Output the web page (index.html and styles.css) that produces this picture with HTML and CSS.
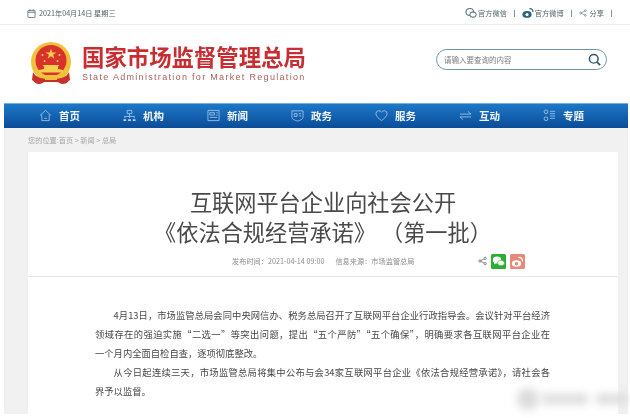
FILE: index.html
```html
<!DOCTYPE html>
<html lang="zh-CN">
<head>
    <meta charset="UTF-8">
    <meta name="viewport" content="width=device-width, initial-scale=1.0">
    <title>互联网平台企业向社会公开《依法合规经营承诺》（第一批）</title>
    <link rel="stylesheet" href="styles.css">
</head>
<body>
    <div class="shot">
        <!-- Top bar -->
        <div class="topbar">
            <div class="date">
                <svg class="ico-date" viewBox="0 0 10 10"><rect x="1" y="1.5" width="8" height="8" rx="1" fill="none" stroke="#5b7480" stroke-width="1"/><path d="M1 3.6h8M3 .5v2M7 .5v2" stroke="#5b7480" stroke-width="1"/></svg>
                <span>2021年04月14日 星期三</span>
            </div>
            <div class="links">
                <svg class="ico-link" viewBox="0 0 12 12"><ellipse cx="4.8" cy="5" rx="4" ry="3.6" fill="none" stroke="#44606e"/><ellipse cx="8" cy="7.6" rx="3.2" ry="2.7" fill="#fff" stroke="#44606e"/></svg>
                <span>官方微信</span>
                <i class="sep"></i>
                <svg class="ico-link" viewBox="0 0 12 12"><ellipse cx="5" cy="7.4" rx="4.6" ry="3.4" fill="#2f5f7a"/><circle cx="5" cy="7.6" r="1.6" fill="#fff"/><path d="M7.5 1.6a3 3 0 0 1 3.4 3.4" fill="none" stroke="#2f5f7a" stroke-width="1.2"/></svg>
                <span>官方微博</span>
                <i class="sep"></i>
                <svg class="ico-link share" viewBox="0 0 12 12"><path d="M9.5 2.5 2.5 6l7 3.5" fill="none" stroke="#44606e" stroke-width=".8"/><circle cx="9.5" cy="2.5" r="1.4" fill="#fff" stroke="#44606e" stroke-width=".8"/><circle cx="2.5" cy="6" r="1.4" fill="#fff" stroke="#44606e" stroke-width=".8"/><circle cx="9.5" cy="9.5" r="1.4" fill="#fff" stroke="#44606e" stroke-width=".8"/></svg>
                <span>分享</span>
                <i class="sep"></i>
            </div>
        </div>

        <!-- Logo and search -->
        <header class="masthead">
            <svg class="emblem" viewBox="0 0 42 44">
                <circle cx="21" cy="20" r="20" fill="#f2c13c"/>
                <circle cx="21" cy="18.5" r="15.5" fill="#d9322c"/>
                <path d="M21 6.5l1.3 3.9h4.1l-3.3 2.4 1.3 3.9-3.4-2.4-3.4 2.4 1.3-3.9-3.3-2.4h4.1z" fill="#f6cf4d"/>
                <circle cx="12.5" cy="13" r="1.1" fill="#f6cf4d"/>
                <circle cx="29.5" cy="13" r="1.1" fill="#f6cf4d"/>
                <circle cx="14.5" cy="19" r="1" fill="#f6cf4d"/>
                <circle cx="27.5" cy="19" r="1" fill="#f6cf4d"/>
                <path d="M9 30.5h24v-2.5l-5-1v-2.5l1.5-1.5h-17l1.5 1.5V27l-5 1z" fill="#f6cf4d"/>
                <path d="M3 30c3 6 9 7 18 7s15-1 18-7l1 8c-2 1-3 4-7 4-3 0-4-2-6-2h-12c-2 0-3 2-6 2-4 0-5-3-7-4z" fill="#c5322a"/>
                <rect x="15" y="33" width="12" height="5" fill="#f2c13c"/>
            </svg>
            <div class="brand">
                <div class="brand-cn">国家市场监督管理总局</div>
                <div class="brand-en">State Administration for Market Regulation</div>
            </div>
            <div class="search">
                <span>请输入要查询的内容</span>
                <svg class="ico-search" viewBox="0 0 14 14"><circle cx="6.2" cy="6.2" r="4.7" fill="none" stroke="#2d566b" stroke-width="1.6"/><path d="M9.8 9.8 13 13" stroke="#2d566b" stroke-width="1.8"/></svg>
            </div>
        </header>

        <!-- Main nav -->
        <nav class="nav">
            <a class="nav-item"><svg viewBox="0 0 14 14"><path d="M1 7 7 1.500 13 7M3 6v6.500h8V6M5.500 10h3" fill="none" stroke="#b9d4ee" stroke-width=".8"/></svg>首页</a>
            <a class="nav-item"><svg viewBox="0 0 14 14"><path d="M4.500 1.500h5v3.500h-5zM7 5v3M1.500 8h11M2 8v2M7 8v2M12 8v2" fill="none" stroke="#b9d4ee" stroke-width=".8"/><path d="M.5 11h3v2h-3zM5.500 11h3v2h-3zM10.500 11h3v2h-3z" fill="#b9d4ee"/></svg>机构</a>
            <a class="nav-item"><svg viewBox="0 0 14 14"><path d="M1 1.500h12v11H1zM3 4h5v2.500H3zM3 9h8M10 4h1.500M10 6.500h1.500" fill="none" stroke="#b9d4ee" stroke-width=".8"/></svg>新闻</a>
            <a class="nav-item"><svg viewBox="0 0 14 14"><path d="M1 2h12v7c0 2-3 3-6 4-3-1-6-2-6-4zM3.500 5h3v3h-3zM8.500 5h2.500M8.500 7.500h2.500" fill="none" stroke="#b9d4ee" stroke-width=".8"/></svg>政务</a>
            <a class="nav-item"><svg viewBox="0 0 14 14"><path d="M7 12.500C3 9.500 1 7.500 1 5a3.200 3.200 0 0 1 6-1.500A3.200 3.200 0 0 1 13 5c0 2.500-2 4.500-6 7.500z" fill="none" stroke="#b9d4ee" stroke-width=".8"/></svg>服务</a>
            <a class="nav-item"><svg viewBox="0 0 14 14"><path d="M1 5.500h12L9.500 2.500M13 8.500H1l3.500 3" fill="none" stroke="#b9d4ee" stroke-width=".8"/></svg>互动</a>
            <a class="nav-item"><svg viewBox="0 0 14 14"><circle cx="3.200" cy="3" r="2" fill="none" stroke="#b9d4ee" stroke-width=".8"/><circle cx="3.200" cy="10.500" r="2" fill="none" stroke="#b9d4ee" stroke-width=".8"/><path d="M7.500 2.500H13M7.500 5H13M7.500 7.500H13M7.500 10H13" stroke="#b9d4ee" stroke-width=".8"/></svg>专题</a>
        </nav>

        <!-- Article -->
        <main class="content">
            <div class="crumbs">您的位置:首页 &gt; 新闻 &gt; 总局</div>
            <article class="card">
                <h1 class="title">互联网平台企业向社会公开<br>《依法合规经营承诺》 （第一批）</h1>
                <div class="meta">
                    <span class="meta-text">发布时间：2021-04-14 09:00</span>
                    <span class="meta-text">信息来源：市场监管总局</span>
                    <div class="meta-share">
                        <svg class="ico-share" viewBox="0 0 12 12"><path d="M9.500 2.500 2.500 6l7 3.500" fill="none" stroke="#555" stroke-width=".9"/><circle cx="9.500" cy="2.500" r="1.500" fill="#fff" stroke="#555" stroke-width=".9"/><circle cx="2.500" cy="6" r="1.500" fill="#fff" stroke="#555" stroke-width=".9"/><circle cx="9.500" cy="9.500" r="1.500" fill="#fff" stroke="#555" stroke-width=".9"/></svg>
                        <svg class="badge" viewBox="0 0 15 15"><rect width="15" height="15" rx="1.500" fill="#2aae32"/><ellipse cx="6" cy="6" rx="4.200" ry="3.400" fill="#fff"/><path d="M3.500 8.500 3 10.500l2-1z" fill="#fff"/><ellipse cx="10" cy="9" rx="3.400" ry="2.800" fill="#fff" stroke="#2aae32" stroke-width=".6"/></svg>
                        <svg class="badge" viewBox="0 0 15 15"><rect width="15" height="15" rx="1.500" fill="#e58a78"/><ellipse cx="6.500" cy="9.500" rx="4.600" ry="3.300" fill="#fff"/><circle cx="6.500" cy="9.700" r="1.700" fill="#e58a78"/><path d="M8.500 3.500a3.500 3.500 0 0 1 4 4" fill="none" stroke="#fff" stroke-width="1.200"/></svg>
                    </div>
                </div>
                <div class="body-text">
                    <p><span class="line first">4月13日，市场监管总局会同中央网信办、税务总局召开了互联网平台企业行政指导会。会议针对平台经济</span><span class="line">领域存在的强迫实施“二选一”等突出问题，提出“五个严防”“五个确保”，明确要求各互联网平台企业在</span>一个月内全面自检自查，逐项彻底整改。</p>
                    <p><span class="line first">从今日起连续三天，市场监管总局将集中公布与会34家互联网平台企业《依法合规经营承诺》，请社会各</span>界予以监督。</p>
                </div>
            </article>
        </main>

        <!-- Watermark smudge over the corner -->
        <div class="smudge">
            <i class="smudge-a"></i><i class="smudge-b"></i><i class="smudge-c"></i>
        </div>
    </div>
</body>
</html>
```

FILE: styles.css
```css
/* General Reset */
html, body {
    margin: 0;
    padding: 0;
    background: #fff;
}

.shot {
    position: relative;
    width: 630px;
    height: 418px;
    overflow: hidden;
    font-family: "Noto Sans CJK SC", "Liberation Sans", sans-serif;
    filter: blur(0.4px);
}

/* Top bar */
.topbar {
    height: 22px;
    padding: 2px 11px 0 27px;
    display: flex;
    align-items: center;
    justify-content: space-between;
    border-bottom: 1px solid #eceeef;
    font-size: 7.2px;
    color: #56646c;
}

.date, .links {
    display: flex;
    align-items: center;
}

.ico-date {
    width: 9px;
    height: 9px;
    margin-right: 3px;
}

.ico-link {
    width: 12px;
    height: 12px;
    margin-right: 1px;
}

.ico-link.share {
    width: 8px;
    height: 10px;
    margin-right: 3px;
}

.sep {
    width: 1px;
    height: 7px;
    margin: 0 7px;
    background: #7f97a3;
}

/* Logo and search */
.masthead {
    height: 78px;
    padding-left: 30px;
    padding-right: 23px;
    display: flex;
    align-items: center;
}

.emblem {
    width: 42px;
    height: 44px;
    margin-right: 10px;
}

.brand {
    margin-bottom: 3px;
}

.brand-cn {
    font-size: 22.4px;
    line-height: 26px;
    font-weight: 700;
    color: #c82d31;
}

.brand-en {
    font-family: "Liberation Sans", sans-serif;
    font-size: 9px;
    line-height: 12px;
    margin-top: 2px;
    letter-spacing: 1.31px;
    color: #a8625f;
    white-space: nowrap;
}

.search {
    margin-left: auto;
    margin-bottom: 10px;
    width: 171px;
    height: 21px;
    padding: 0 5px 0 7px;
    box-sizing: border-box;
    display: flex;
    align-items: center;
    justify-content: space-between;
    border: 1px solid #6f96a6;
    border-radius: 11px;
    font-size: 7.5px;
    color: #7c7c7c;
}

.ico-search {
    width: 13px;
    height: 13px;
}

/* Main nav */
.nav {
    margin: 0 2px 0 4px;
    height: 25px;
    padding-left: 35px;
    display: flex;
    background: linear-gradient(#1c78c8, #0a4c98);
    border-top: 1px solid #6fb0e0;
    box-sizing: border-box;
}

.nav-item {
    width: 84px;
    padding-bottom: 2px;
    display: flex;
    align-items: center;
    font-size: 10.5px;
    font-weight: 700;
    color: #f2f6fb;
}

.nav-item svg {
    width: 13px;
    height: 13px;
    margin-right: 7px;
}

/* Article */
.content {
    height: 286px;
    margin: 0 2px 0 4px;
    padding: 0 10px 0 24px;
    background: #f1f1f2;
}

.crumbs {
    height: 24px;
    line-height: 24px;
    font-size: 7.2px;
    color: #a6a6a6;
}

.card {
    height: 262px;
    background: #fff;
}

.title {
    margin: 0;
    padding-top: 34px;
    font-size: 22.2px;
    line-height: 30px;
    font-weight: 400;
    text-align: center;
    color: #4a4a4a;
}

.meta {
    height: 30px;
    padding-left: 204px;
    padding-right: 93px;
    display: flex;
    align-items: center;
    border-bottom: 1px solid #e6e6e6;
    font-size: 7.2px;
    color: #8c8c8c;
}

.meta-text {
    margin-right: 11px;
}

.meta-share {
    margin-left: auto;
    display: flex;
    align-items: center;
    gap: 4px;
}

.ico-share {
    width: 9px;
    height: 10px;
}

.badge {
    width: 15px;
    height: 15px;
}

.body-text {
    padding: 29px 68px 0 67px;
    font-size: 9.3px;
    line-height: 19px;
    color: #484848;
}

.body-text p {
    margin: 0;
}

/* Lines that end where the original wraps */
.line {
    display: block;
    text-align: justify;
    text-align-last: justify;
}

.line.first {
    text-indent: 2em;
}

/* Watermark */
.smudge i {
    position: absolute;
    background: #dcdcdc;
    filter: blur(4px);
}

.smudge-a {
    left: 517px;
    top: 388px;
    width: 22px;
    height: 22px;
    border-radius: 50%;
}

.smudge-b {
    left: 542px;
    top: 394px;
    width: 46px;
    height: 10px;
}

.smudge-c {
    left: 596px;
    top: 394px;
    width: 32px;
    height: 10px;
}
```
